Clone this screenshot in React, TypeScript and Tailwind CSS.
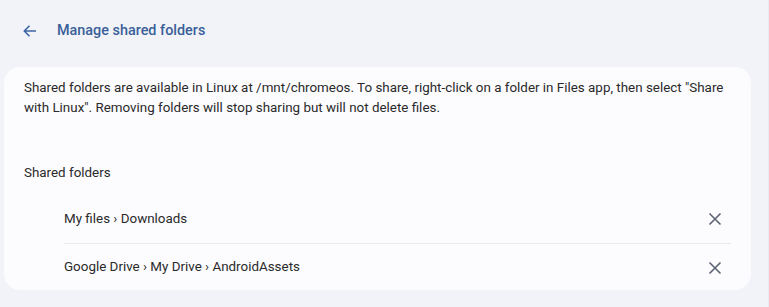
import React from "react";

const folders = ["My files › Downloads", "Google Drive › My Drive › AndroidAssets"];

const App: React.FC = () => {
  return (
    <div className="h-[307px] w-full overflow-hidden bg-[#f2f3f9] font-['Roboto',sans-serif] flex">
      <div className="flex-1 flex flex-col">
        {/* Header */}
        <div className="h-[67px] flex items-center pl-[22px] pb-[5px]">
          <button className="w-4 h-4 flex items-center justify-center text-[#3b64a6]">
            <svg width="16" height="16" viewBox="0 0 16 16" fill="none">
              <path d="M14 8H2.5M7.5 2.8L2.3 8l5.2 5.2" stroke="currentColor" strokeWidth="1.6" />
            </svg>
          </button>
          <h1 className="ml-[19px] text-[14.4px] font-medium text-[#3a5f98]">Manage shared folders</h1>
        </div>

        {/* Card */}
        <div className="ml-[4px] mr-[17px] h-[223px] bg-[#fcfcff] rounded-[16px] pt-[11px] px-5">
          <p className="text-[13.4px] leading-[20px] text-[#2a2a2a]">
            Shared folders are available in Linux at /mnt/chromeos. To share, right-click on a folder in Files app, then
            select "Share with Linux". Removing folders will stop sharing but will not delete files.
          </p>
          <h2 className="mt-[45px] text-[13.4px] leading-[20px] text-[#2a2a2a]">Shared folders</h2>
          <div className="mt-[12px] ml-10">
            {folders.map((f, i) => (
              <div
                key={f}
                className={`flex items-center justify-between ${i === 0 ? "h-[49px] border-b border-[#e8e9ee]" : "h-[47px]"}`}
              >
                <span className="text-[13.4px] text-[#2a2a2a]">{f}</span>
                <button className="w-8 h-8 flex items-center justify-center text-[#5b6373]">
                  <svg width="14" height="14" viewBox="0 0 14 14" fill="none">
                    <path d="M1.5 1.5l11 11M12.5 1.5l-11 11" stroke="currentColor" strokeWidth="1.6" />
                  </svg>
                </button>
              </div>
            ))}
          </div>
        </div>
      </div>
      <div className="w-px bg-[#e9ebf2]" />
    </div>
  );
};

export default App;
